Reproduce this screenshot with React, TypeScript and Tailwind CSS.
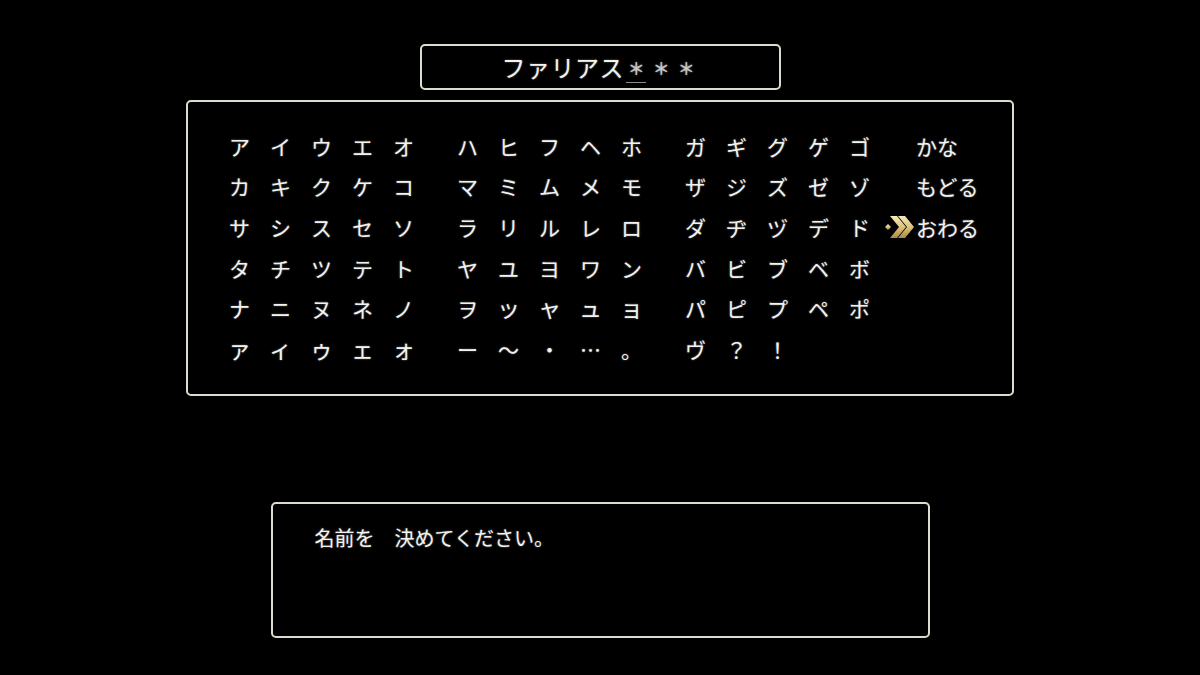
import React from 'react';

const groups: string[][][] = [
  [
    ['ア', 'イ', 'ウ', 'エ', 'オ'],
    ['カ', 'キ', 'ク', 'ケ', 'コ'],
    ['サ', 'シ', 'ス', 'セ', 'ソ'],
    ['タ', 'チ', 'ツ', 'テ', 'ト'],
    ['ナ', 'ニ', 'ヌ', 'ネ', 'ノ'],
    ['ァ', 'ィ', 'ゥ', 'ェ', 'ォ'],
  ],
  [
    ['ハ', 'ヒ', 'フ', 'ヘ', 'ホ'],
    ['マ', 'ミ', 'ム', 'メ', 'モ'],
    ['ラ', 'リ', 'ル', 'レ', 'ロ'],
    ['ヤ', 'ユ', 'ヨ', 'ワ', 'ン'],
    ['ヲ', 'ッ', 'ャ', 'ュ', 'ョ'],
    ['ー', '～', '・', '…', '。'],
  ],
  [
    ['ガ', 'ギ', 'グ', 'ゲ', 'ゴ'],
    ['ザ', 'ジ', 'ズ', 'ゼ', 'ゾ'],
    ['ダ', 'ヂ', 'ヅ', 'デ', 'ド'],
    ['バ', 'ビ', 'ブ', 'ベ', 'ボ'],
    ['パ', 'ピ', 'プ', 'ペ', 'ポ'],
    ['ヴ', '？', '！', '', ''],
  ],
];

const small = 'ァィゥェォッャュョ';

const menu = ['かな', 'もどる', 'おわる'];

const Cursor = () => (
  <svg width="30" height="26" viewBox="0 0 30 26" className="absolute left-[-32px] top-[7px]">
    <defs>
      <linearGradient id="gold" x1="0" y1="0" x2="0" y2="1">
        <stop offset="0" stopColor="#f6ebbd" />
        <stop offset="0.5" stopColor="#dcc27c" />
        <stop offset="1" stopColor="#a98a45" />
      </linearGradient>
    </defs>
    <polygon points="1,13 4,10 7,13 4,16" fill="url(#gold)" />
    <polygon points="6,2 13,2 22,13 13,24 6,24 15,13" fill="url(#gold)" />
    <polygon points="14,2 21,2 30,13 21,24 14,24 23,13" fill="url(#gold)" />
  </svg>
);

const glow = '[text-shadow:0_0_2px_rgba(255,255,255,0.45)]';

export default function App() {
  return (
    <div
      className="w-[1200px] h-[675px] bg-black flex flex-col items-center text-[#f2f2f0]"
      style={{ fontFamily: '"Noto Sans CJK JP", "Noto Sans", sans-serif' }}
    >
      {/* name entry */}
      <div className="mt-[44px] w-[361px] h-[46px] border-2 border-[#dedacd] rounded-[5px] flex items-center justify-center">
        <div className={`flex items-center text-[24px] leading-none ${glow}`}>
          {'ファリアス'.split('').map((c, i) => (
            <span key={i} className="w-[24.5px] text-center">{c}</span>
          ))}
          {[0, 1, 2].map((i) => (
            <span key={'s' + i} className="relative w-[25px] text-center text-[#c4c4c4] text-[17px] font-bold">
              ＊
              {i === 0 && <span className="absolute left-[2px] top-[23px] w-[20px] h-[1px] bg-[#8a8a8a]" />}
            </span>
          ))}
        </div>
      </div>

      {/* character grid */}
      <div className="mt-[10px] w-[828px] h-[296px] border-2 border-[#dedacd] rounded-[5px] flex pt-[24px] pl-[31px]">
        {groups.map((g, gi) => (
          <div key={gi} className={`flex flex-col ${gi > 0 ? 'ml-[23px]' : ''}`}>
            {g.map((row, ri) => (
              <div key={ri} className="flex h-[40.6px] items-center">
                {row.map((c, ci) => (
                  <span
                    key={ci}
                    className={`w-[41px] text-center leading-none ${glow} ${small.includes(c) && c ? 'text-[23px] -mt-[2px]' : 'text-[21px]'}`}
                  >
                    {c}
                  </span>
                ))}
              </div>
            ))}
          </div>
        ))}
        <div className="flex flex-col ml-[36px]">
          {menu.map((m, i) => (
            <div key={i} className={`relative h-[40.6px] flex items-center text-[21px] leading-none ${glow}`}>
              {i === 2 && <Cursor />}
              {m}
            </div>
          ))}
        </div>
      </div>

      {/* message */}
      <div className="mt-[106px] w-[659px] h-[136px] border-2 border-[#dedacd] rounded-[5px] pl-[42px] pt-[24px]">
        <div className={`text-[20px] leading-none ${glow}`}>名前を　決めてください。</div>
      </div>
    </div>
  );
}
